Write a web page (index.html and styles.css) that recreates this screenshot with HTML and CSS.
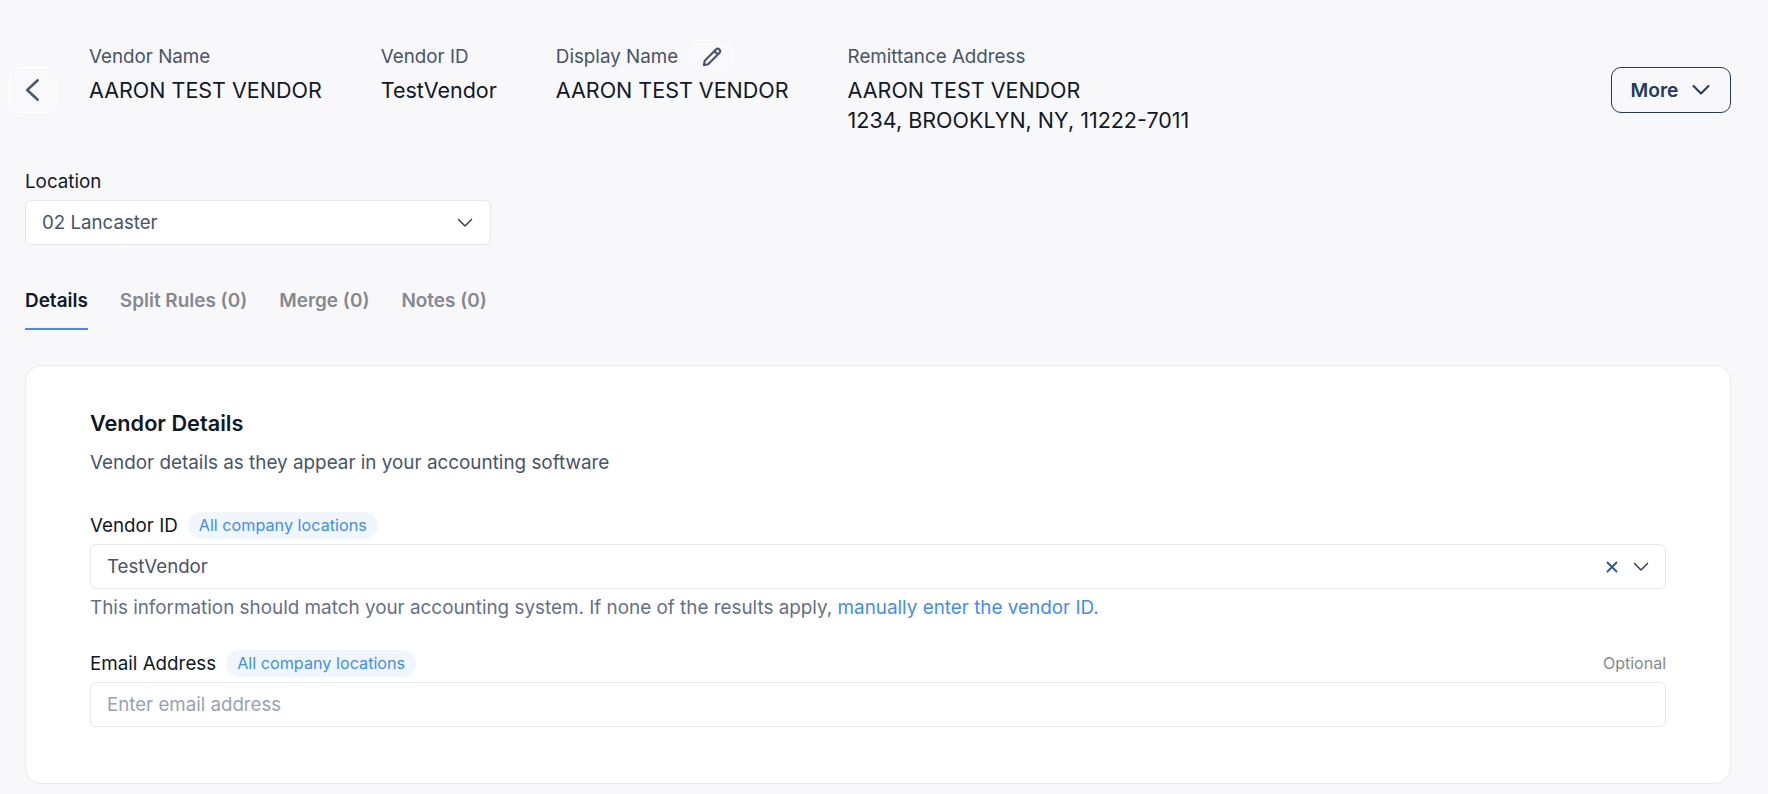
FILE: index.html
```html
<!DOCTYPE html>
<html lang="en">
<head>
<meta charset="utf-8">
<title>Vendor</title>
<link rel="stylesheet" href="styles.css">
</head>
<body>
<main class="page">
  <header class="header">
    <button class="back" type="button" aria-label="Back">
      <svg width="24" height="24" viewBox="0 0 24 24" fill="none"><path d="M16.7 2.3 L6.2 12 L16.7 21.7" stroke="#4b5a70" stroke-width="2.6" stroke-linecap="round" stroke-linejoin="round"/></svg>
    </button>
    <div class="meta">
      <div class="col"><div class="meta-label">Vendor Name</div><div class="meta-value">AARON TEST VENDOR</div></div>
      <div class="col"><div class="meta-label">Vendor ID</div><div class="meta-value">TestVendor</div></div>
      <div class="col">
        <div class="meta-label">Display Name
          <button class="edit" type="button" aria-label="Edit">
            <svg width="22" height="22" viewBox="0 0 20 20" fill="none"><path d="M2.6 17.4 L3.4 13.4 L13.6 3.2 C14.5 2.3 15.8 2.3 16.7 3.2 C17.6 4.1 17.6 5.4 16.7 6.3 L6.5 16.5 Z M12.2 4.6 L15.3 7.7" stroke="#475467" stroke-width="1.9" stroke-linejoin="round"/></svg>
          </button>
        </div>
        <div class="meta-value">AARON TEST VENDOR</div>
      </div>
      <div class="col"><div class="meta-label">Remittance Address</div><div class="meta-value">AARON TEST VENDOR<br>1234, BROOKLYN, NY, 11222-7011</div></div>
    </div>
    <button class="more" type="button">More
      <svg width="20" height="12" viewBox="0 0 20 12" fill="none"><path d="M2.5 2 L10 9.5 L17.5 2" stroke="#243b5a" stroke-width="2.1" stroke-linecap="round" stroke-linejoin="round"/></svg>
    </button>
  </header>

  <section class="location">
    <div class="field-label">Location</div>
    <div class="select location-select">
      <span class="select-text">02 Lancaster</span>
      <svg class="chev" width="16" height="10" viewBox="0 0 16 10" fill="none"><path d="M1.5 1.5 L8 8 L14.5 1.5" stroke="#344054" stroke-width="1.5" stroke-linecap="round" stroke-linejoin="round"/></svg>
    </div>
  </section>

  <nav class="tabs">
    <a class="tab active">Details</a>
    <a class="tab">Split Rules (0)</a>
    <a class="tab">Merge (0)</a>
    <a class="tab">Notes (0)</a>
  </nav>

  <section class="card">
    <h2 class="card-title">Vendor Details</h2>
    <p class="card-desc">Vendor details as they appear in your accounting software</p>

    <div class="field first">
      <div class="label-row"><span class="field-label">Vendor ID</span><span class="chip">All company locations</span></div>
      <div class="select">
        <span class="select-text">TestVendor</span>
        <span class="controls">
          <svg width="12" height="12" viewBox="0 0 12 12" fill="none"><path d="M1.5 1.5 L10.5 10.5 M10.5 1.5 L1.5 10.5" stroke="#2a5a98" stroke-width="1.9" stroke-linecap="round"/></svg>
          <svg width="16" height="10" viewBox="0 0 16 10" fill="none"><path d="M1.5 1.5 L8 8 L14.5 1.5" stroke="#344054" stroke-width="1.5" stroke-linecap="round" stroke-linejoin="round"/></svg>
        </span>
      </div>
      <p class="hint">This information should match your accounting system. If none of the results apply, <a class="link">manually enter the vendor ID.</a></p>
    </div>

    <div class="field second">
      <div class="label-row"><span class="field-label">Email Address</span><span class="chip">All company locations</span><span class="optional">Optional</span></div>
      <div class="select"><span class="placeholder">Enter email address</span></div>
    </div>
  </section>
</main>
</body>
</html>
```

FILE: styles.css
```css
* { box-sizing: border-box; }
html, body { margin: 0; height: 100%; }
body {
  background: #f8f8fb;
  font-family: Inter, "Liberation Sans", sans-serif;
  color: #101828;
  overflow: hidden;
}
button { font-family: inherit; }
.page { padding: 44px 37px 0 25px; }

.header { display: flex; align-items: flex-start; padding-left: 0; }
.back {
  width: 48px; height: 46px; margin: 23px 0 0 -16px;
  display: flex; align-items: center; justify-content: center;
  background: #f9f9fc; border: 1px solid #ffffff; border-radius: 10px; padding: 0;
}
.meta { display: flex; gap: 59px; margin-left: 32px; flex: 1; }
.meta-label {
  display: flex; align-items: center; gap: 11px;
  height: 26px; font-size: 18.8px; line-height: 26px; color: #475467;
}
.meta-value { margin-top: 5px; font-size: 21.5px; line-height: 30px; color: #101828; }
.edit {
  width: 45px; height: 26px; padding: 0;
  display: flex; align-items: center; justify-content: center;
  background: #f9f9fc; border: 1px solid #ffffff; border-radius: 10px;
}
.more {
  width: 120px; height: 46px; margin-top: 23px;
  display: flex; align-items: center; justify-content: center; gap: 13px;
  background: transparent; border: 1px solid #243b5a; border-radius: 10px;
  font-size: 19.2px; font-weight: 600; color: #243b5a; padding: 0;
}

.location { margin-top: 34px; width: 466px; }
.field-label { font-size: 18.8px; line-height: 26px; color: #101828; display: block; }
.select {
  height: 45px; margin-top: 5px;
  display: flex; align-items: center; justify-content: space-between;
  padding: 0 16px;
  background: #fff; border: 1px solid #e4e7ec; border-radius: 6px;
}
.location-select { padding-right: 17px; }
.select-text { font-size: 18.7px; color: #475467; }
.placeholder { font-size: 18.7px; color: #98a2b3; }
.controls { display: flex; align-items: center; gap: 15px; }

.tabs { display: flex; gap: 32px; margin-top: 39px; height: 46px; }
.tab { font-size: 18.95px; line-height: 34px; font-weight: 600; color: #85888e; height: 46px; }
.tab.active { color: #101828; border-bottom: 2px solid #3f8ef0; }

.card {
  margin-top: 35px; height: 419px; padding: 42px 64px 0 64px;
  background: #fff; border: 1px solid #e9eaee; border-radius: 16px;
}
.card-title { margin: 0; font-size: 21.7px; line-height: 30px; font-weight: 600; color: #101828; }
.card-desc { margin: 12px 0 0; font-size: 18.87px; line-height: 26px; color: #475467; }
.field.first { margin-top: 36px; }
.field.second { margin-top: 29px; }
.label-row { display: flex; align-items: center; gap: 10px; height: 27px; }
.chip {
  height: 27px; padding: 0 11px 1px; display: flex; align-items: center;
  background: #f1f6fd; border-radius: 14px; font-size: 16.2px; color: #3f8ef0;
}
.optional { margin-left: auto; padding-bottom: 2px; font-size: 16px; color: #85888e; }
.label-row + .select { margin-top: 5px; }
.hint { margin: 6px 0 0; font-size: 18.87px; line-height: 26px; color: #667085; }
.link { color: #3f8ef0; }
```
